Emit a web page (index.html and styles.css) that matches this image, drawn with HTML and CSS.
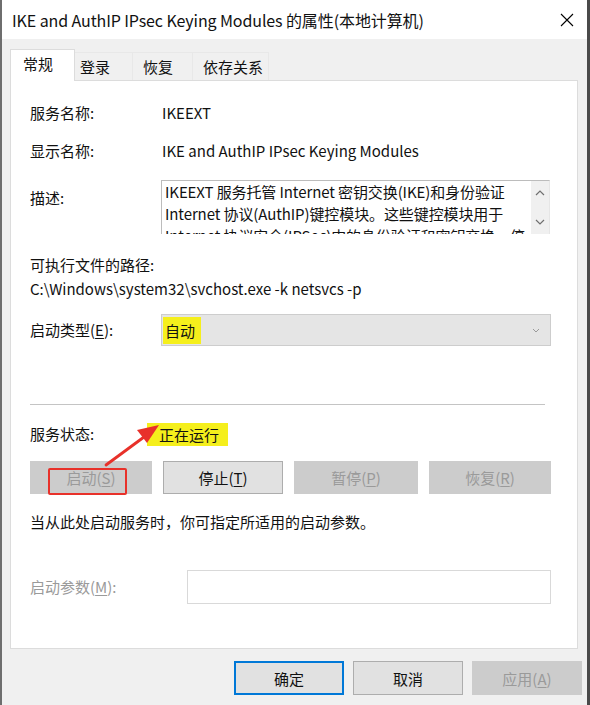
FILE: index.html
```html
<!DOCTYPE html>
<html lang="zh-CN">
<head>
<meta charset="utf-8">
<title>IKE and AuthIP IPsec Keying Modules 的属性(本地计算机)</title>
<link rel="stylesheet" href="styles.css">
</head>
<body>
<div class="window">
  <div class="titlebar">
    <span class="title">IKE and AuthIP IPsec Keying Modules 的属性(本地计算机)</span>
    <svg class="close" width="14" height="14" viewBox="0 0 14 14"><path d="M1 1 L13 13 M13 1 L1 13" stroke="#000" stroke-width="1.1" fill="none"/></svg>
  </div>
  <div class="client">
    <div class="tabs">
      <div class="tab active">常规</div>
      <div class="tab t2">登录</div>
      <div class="tab t3">恢复</div>
      <div class="tab t4">依存关系</div>
    </div>
    <div class="panel">
      <div class="row r1"><span class="label">服务名称:</span><span class="value">IKEEXT</span></div>
      <div class="row r2"><span class="label">显示名称:</span><span class="value">IKE and AuthIP IPsec Keying Modules</span></div>
      <div class="row r3">
        <span class="label top">描述:</span>
        <div class="desc">
          <div class="desc-text">
            <div class="line">IKEEXT 服务托管 Internet 密钥交换(IKE)和身份验证</div>
            <div class="line">Internet 协议(AuthIP)键控模块。这些键控模块用于</div>
            <div class="line">Internet 协议安全(IPSec)中的身份验证和密钥交换。停</div>
          </div>
          <div class="scroll">
            <svg width="10" height="6" viewBox="0 0 10 6"><path d="M1 5 L5 1 L9 5" stroke="#707070" stroke-width="1.2" fill="none"/></svg>
            <svg width="10" height="6" viewBox="0 0 10 6"><path d="M1 1 L5 5 L9 1" stroke="#707070" stroke-width="1.2" fill="none"/></svg>
          </div>
        </div>
      </div>
      <div class="row r4"><span>可执行文件的路径:</span></div>
      <div class="row r5"><span>C:\Windows\system32\svchost.exe -k netsvcs -p</span></div>
      <div class="row r6">
        <span class="label">启动类型(<u>E</u>):</span>
        <div class="combo">
          <span class="hl hl-auto">自动</span>
          <svg class="chev" width="8" height="5" viewBox="0 0 8 5"><path d="M1 1 L4 4 L7 1" stroke="#9a9a9a" stroke-width="1" fill="none"/></svg>
        </div>
      </div>
      <div class="sep"></div>
      <div class="row r7"><span class="label status-label">服务状态:</span><span class="hl hl-run">正在运行</span></div>
      <div class="btnrow">
        <div class="btn disabled">启动(<u>S</u>)</div>
        <div class="btn">停止(<u>T</u>)</div>
        <div class="btn disabled">暂停(<u>P</u>)</div>
        <div class="btn disabled">恢复(<u>R</u>)</div>
      </div>
      <div class="row r9"><span>当从此处启动服务时，你可指定所适用的启动参数。</span></div>
      <div class="row r10">
        <span class="label param-label">启动参数(<u>M</u>):</span>
        <div class="input"></div>
      </div>
      <div class="redbox"></div>
      <svg class="arrow" width="70" height="50" viewBox="0 0 70 50">
        <path d="M4 47 L42 19" stroke="#e8312a" stroke-width="2.8" stroke-linecap="round" fill="none"/>
        <path d="M57 7 L35 12 L45 25 Z" fill="#e8312a"/>
      </svg>
    </div>
    <div class="footer">
      <div class="fbtn default">确定</div>
      <div class="fbtn">取消</div>
      <div class="fbtn disabled">应用(<u>A</u>)</div>
    </div>
  </div>
</div>
</body>
</html>
```

FILE: styles.css
```css
* { box-sizing: border-box; }
html, body { margin: 0; padding: 0; background: #f0f0f0; }
body {
  font-family: "Noto Sans CJK SC", "Noto Sans", sans-serif;
  font-size: 15px;
  color: #111;
}
.window {
  width: 590px;
  height: 705px;
  border-left: 2px solid #6e6e6e;
  border-right: 3px solid #4a4a4a;
  display: flex;
  flex-direction: column;
  background: #f0f0f0;
}
.titlebar {
  height: 39px;
  background: #fff;
  display: flex;
  align-items: center;
  justify-content: space-between;
  padding: 0 13px 0 10px;
}
.title { font-size: 16px; color: #111; letter-spacing: -0.1px; }
.close { display: block; }
.client { flex: 1; padding: 10px 9px 0 8px; }
.tabs { display: flex; height: 31px; align-items: flex-end; }
.tab {
  height: 28px;
  line-height: 28px;
  background: #f0f0f0;
  border: 1px solid #e8e8e8;
  border-bottom: none;
  color: #111;
}
.tab.active {
  width: 65px;
  padding-left: 12px;
  line-height: 28px;
  background: #fff;
  border-color: #dcdcdc;
  position: relative;
  z-index: 1;
  margin-bottom: -1px;
  height: 32px;
}
.t2 { width: 58px; padding-left: 5px; border-left: none; }
.t3 { width: 60px; padding-left: 10px; border-left: none; }
.t4 { width: 76px; padding-left: 10px; border-left: none; }
.panel {
  position: relative;
  height: 569px;
  width: 568px;
  background: #fff;
  border: 1px solid #dcdcdc;
  padding: 0 0 0 19px;
  display: flex;
  flex-direction: column;
}
.row { display: flex; align-items: center; line-height: 20px; }
.label { width: 131px; flex: none; }
.label.top { align-self: flex-start; margin-top: 8px; }
.r1 { margin-top: 22px; height: 20px; }
.r2 { margin-top: 18px; height: 20px; }
.r3 { margin-top: 19px; height: 54px; align-items: flex-start; }
.value { margin-left: 1px; }
.desc {
  width: 389px;
  height: 54px;
  border: 1px solid #bcbcbc;
  border-right-color: #e6e6e6;
  border-bottom: none;
  display: flex;
  overflow: hidden;
}
.desc-text { flex: 1; padding: 0 0 0 3px; overflow: hidden; }
.desc-text .line { white-space: nowrap; line-height: 22px; letter-spacing: -0.1px; }
.scroll {
  width: 18px;
  background: #f0f0f0;
  display: flex;
  flex-direction: column;
  align-items: center;
  justify-content: space-between;
  padding: 9px 0 9px;
}
.scroll svg { display: block; }
.r4 { margin-top: 21px; height: 20px; }
.r5 { margin-top: 4px; height: 20px; }
.r6 { margin-top: 15px; height: 32px; }
.combo {
  width: 390px;
  height: 32px;
  background: #e5e5e5;
  border: 1px solid #cdcdcd;
  display: flex;
  align-items: center;
  justify-content: space-between;
  padding: 0 10px 0 1px;
}
.hl { background: #f5ef1c; }
.hl-auto { padding: 4px 6px 3px 2px; }
.chev { display: block; }
.sep { margin-top: 58px; height: 1px; width: 515px; background: #c4c4c4; }
.r7 { margin-top: 19px; height: 20px; }
.status-label { width: 117px; }
.hl-run { padding: 2px 9px 1px 12px; }
.btnrow {
  margin-top: 17px;
  height: 33px;
  width: 521px;
  display: grid;
  grid-template-columns: 122px 120px 124px 122px;
  column-gap: 10px;
  justify-content: space-between;
}
.btn, .fbtn {
  display: flex;
  align-items: center;
  justify-content: center;
  background: #e1e1e1;
  border: 1px solid #adadad;
  color: #111;
}
.btn.disabled, .fbtn.disabled {
  background: #cccccc;
  border-color: #cccccc;
  color: #9a9a9a;
}
.r9 { margin-top: 18px; height: 20px; }
.r10 { margin-top: 38px; height: 34px; }
.param-label { width: 157px; color: #9a9a9a; }
.input { width: 364px; height: 34px; border: 1px solid #d9d9d9; background: #fff; }
.redbox {
  position: absolute;
  left: 37px;
  top: 387px;
  width: 79px;
  height: 27px;
  border: 2px solid #e8312a;
  border-radius: 2px;
}
.arrow { position: absolute; left: 91px; top: 337px; }
.footer {
  display: flex;
  justify-content: flex-end;
  gap: 9px;
  margin-top: 12px;
  margin-right: -4px;
}
.fbtn { width: 110px; height: 34px; }
.fbtn.default { border: 2px solid #0078d7; }
u { text-decoration-thickness: 1px; text-underline-offset: 2px; }
```
